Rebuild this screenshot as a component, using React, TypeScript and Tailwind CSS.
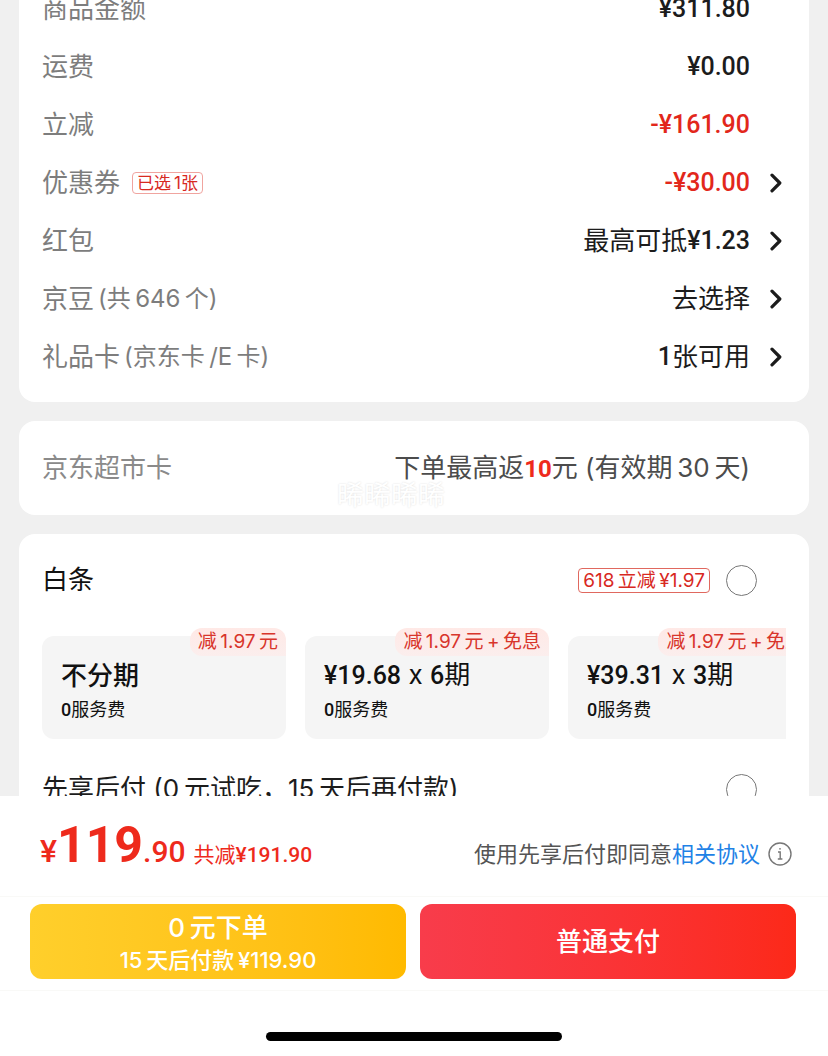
import type { ReactNode } from "react";

const num = "font-[Roboto,'Noto_Sans_CJK_SC',sans-serif] font-medium";
const amount = `${num} text-[25px]`;

function Chevron() {
  return (
    <svg viewBox="0 0 12 20" className="h-5 w-3" fill="none" stroke="#1c1c1c" strokeWidth="3.2" strokeLinecap="round" strokeLinejoin="round" aria-hidden="true">
      <path d="M2 2.2 L9.8 10 L2 17.8" />
    </svg>
  );
}

function Row({ label, value, arrow }: { label: ReactNode; value: ReactNode; arrow?: boolean }) {
  return (
    <li className="flex h-[58px] items-center">
      <div className="flex items-center text-[#7d7d7d]">{label}</div>
      <div className="ml-auto flex items-center text-[#1c1c1c]">{value}</div>
      <div className="w-9 shrink-0 pl-5">{arrow && <Chevron />}</div>
    </li>
  );
}

function Option({ title, badge }: { title: ReactNode; badge: string }) {
  return (
    <button type="button" className="relative h-[103px] w-[244px] shrink-0 rounded-xl bg-[#f5f5f5] px-[19px] pt-1.5 text-left text-[#111]">
      <span className="absolute -top-2 right-0 h-7 rounded-t-xl rounded-bl-xl bg-gradient-to-b from-[#ffe9e6] to-[#fbeeed] px-2 text-[19px] leading-7 whitespace-nowrap text-[#d8352b]">
        {badge}
      </span>
      <span className="block leading-8 whitespace-nowrap">{title}</span>
      <span className="mt-1.5 block text-lg leading-6">
        <span className={num}>0</span>服务费
      </span>
    </button>
  );
}

function Radio({ label }: { label: string }) {
  return (
    <input
      type="radio"
      name="pay"
      aria-label={label}
      className="mr-[29px] size-[31px] shrink-0 appearance-none rounded-full border border-[#777] bg-white checked:border-8 checked:border-[#ee2a1c]"
    />
  );
}

const card = "bg-white px-[23px] rounded-2xl";

export default function App() {
  return (
    <div className="flex h-screen flex-col overflow-hidden bg-[#f0f0f0] font-[Inter,'Noto_Sans_CJK_SC',sans-serif] text-[26px] leading-9 whitespace-nowrap">
      <main className="flex min-h-0 flex-1 flex-col gap-[19px] overflow-hidden px-[19px]">
        <ul className={`${card} -mt-5 shrink-0 pb-4`}>
          <Row label="商品金额" value={<span className={amount}>¥311.80</span>} />
          <Row label="运费" value={<span className={amount}>¥0.00</span>} />
          <Row label="立减" value={<span className={`${amount} text-[#e2271b]`}>-¥161.90</span>} />
          <Row
            label={
              <>
                优惠券
                <span className="ml-3 rounded-sm border border-[#f0a49f] px-1 text-[17px] leading-5 text-[#d8291f]">已选{"\u2009"}1张</span>
              </>
            }
            value={<span className={`${amount} text-[#e2271b]`}>-¥30.00</span>}
            arrow
          />
          <Row label="红包" value={<>最高可抵<span className={amount}>¥1.23</span></>} arrow />
          <Row label={<>京豆<span className="ml-1 text-2xl">(共{"\u2009"}646{"\u2009"}个)</span></>} value="去选择" arrow />
          <Row label={<>礼品卡<span className="ml-1 text-2xl">(京东卡{"\u2009"}/E{"\u2009"}卡)</span></>} value={<><span className={amount}>1</span>张可用</>} arrow />
        </ul>

        <section className={`${card} relative flex h-[94px] shrink-0 items-center`}>
          <span className="text-[#8a8a8a]">京东超市卡</span>
          <span className="mr-9 ml-auto text-[#4c4c4c]">
            下单最高返<b className="font-[Roboto,sans-serif] text-2xl font-bold text-[#ee2a1c]">10</b>元 (有效期{"\u2009"}30{"\u2009"}天)
          </span>
          <span className="absolute top-[57px] left-[318px] text-[27px] text-white [text-shadow:0_0_2px_#dcdcdc]">晞晞晞晞</span>
        </section>

        <section className={`${card} shrink-0`}>
          <div className="flex h-[94px] items-center pb-0.5">
            <span className="text-[#111]">白条</span>
            <span className="mr-4 ml-auto rounded-sm border border-[#e0685f] px-1 text-[19px] leading-[23px] text-[#d8291f]">618{"\u2009"}立减{"\u2009"}¥1.97</span>
            <Radio label="白条" />
          </div>
          <div className="flex gap-[19px] overflow-hidden pt-2">
            <Option title={<span className="font-medium">不分期</span>} badge={"减\u20091.97\u2009元"} />
            <Option title={<><span className={amount}>¥19.68</span> x <span className={amount}>6</span>期</>} badge={"减\u20091.97\u2009元\u2009+\u2009免息"} />
            <Option title={<><span className={amount}>¥39.31</span> x <span className={amount}>3</span>期</>} badge={"减\u20091.97\u2009元\u2009+\u2009免息"} />
          </div>
          <div className="flex h-[100px] items-center text-[#1c1c1c]">
            <span className="mr-auto">先享后付 (0{"\u2009"}元试吃，15{"\u2009"}天后再付款)</span>
            <Radio label="先享后付" />
          </div>
        </section>
      </main>

      <footer className="shrink-0 bg-white">
        <div className="flex h-[100px] items-center justify-between pt-4 pr-9 pl-10">
          <p className="flex items-baseline pb-4 text-[#ee2a1c]">
            <span className={`${num} text-[32px]`}>¥</span>
            <span className="font-[Roboto,sans-serif] text-[50px] leading-none font-bold">119</span>
            <span className={`${num} text-[30px]`}>.90</span>
            <span className="ml-2 text-[21px]">共减<span className={num}>¥191.90</span></span>
          </p>
          <p className="flex items-center text-[22px] text-[#555]">
            使用先享后付即同意
            <a href="#agreement" className="text-[#1f82e6]">相关协议</a>
            <svg viewBox="0 0 24 24" className="ml-2 size-6" fill="none" stroke="#777" strokeWidth="1.4" aria-hidden="true">
              <circle cx="12" cy="12" r="11" />
              <path d="M10 10h2.2v7M9.8 17h4.6" />
              <circle cx="12" cy="6.8" r="0.9" fill="#777" stroke="none" />
            </svg>
          </p>
        </div>
        <div className="grid grid-cols-2 gap-[14px] border-y border-[#f9f9f7] pt-[7px] pr-8 pb-[11px] pl-[30px]">
          <button type="button" className="flex h-[75px] flex-col items-center justify-center rounded-xl bg-gradient-to-r from-[#ffcf2b] to-[#ffba00] font-medium text-white">
            <span className="leading-9">0{"\u2009"}元下单</span>
            <span className="text-[22px] leading-7">15{"\u2009"}天后付款{"\u2009"}¥119.90</span>
          </button>
          <button type="button" className="h-[75px] rounded-xl bg-gradient-to-r from-[#f83c4b] to-[#fc2918] font-medium text-white">普通支付</button>
        </div>
        <div className="flex justify-center pt-[41px] pb-[15px]">
          <div className="h-[9px] w-[296px] rounded-full bg-black" />
        </div>
      </footer>
    </div>
  );
}
